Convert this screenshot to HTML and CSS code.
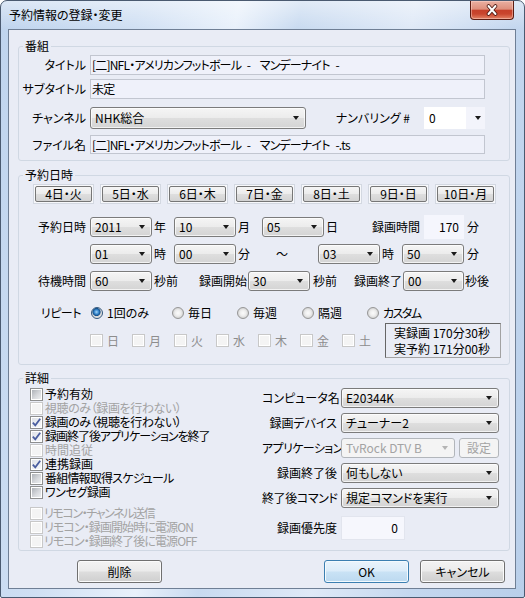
FILE: index.html
```html
<!DOCTYPE html>
<html lang="ja">
<head>
<meta charset="utf-8">
<title>予約情報の登録・変更</title>
<link rel="stylesheet" href="styles.css">
</head>
<body>
<div class="window">
  <div class="titlebar">
    <div class="title">予約情報の登録・変更</div>
    <div class="close">
      <svg width="14" height="12" viewBox="0 0 14 12"><path d="M3.5 2 L10.5 10 M10.5 2 L3.5 10" stroke="#4a1710" stroke-width="3.6" stroke-linecap="round"/><path d="M3.5 2 L10.5 10 M10.5 2 L3.5 10" stroke="#ffffff" stroke-width="2" stroke-linecap="round"/></svg>
    </div>
  </div>
  <div class="client">
    <fieldset class="group g1">
      <legend>番組</legend>
      <div class="row r1">
        <span class="lbl">タイトル</span>
        <span class="edit">[二]NFL・アメリカンフットボール&nbsp;&nbsp;&nbsp;-&nbsp;&nbsp;&nbsp;&nbsp;&nbsp;マンデーナイト&nbsp;&nbsp;&nbsp;-</span>
      </div>
      <div class="row r2">
        <span class="lbl">サブタイトル</span>
        <span class="edit">未定</span>
      </div>
      <div class="row r3">
        <span class="lbl">チャンネル</span>
        <span class="cmb w216 h22"><span class="v">NHK総合</span><i class="arr"></i></span>
        <span class="lbl2">ナンバリング #</span>
        <span class="ecmb"><span class="ev">0</span><i class="arr"></i></span>
      </div>
      <div class="row r4">
        <span class="lbl">ファイル名</span>
        <span class="edit">[二]NFL・アメリカンフットボール&nbsp;&nbsp;&nbsp;-&nbsp;&nbsp;&nbsp;&nbsp;&nbsp;マンデーナイト&nbsp;&nbsp;&nbsp;-.ts</span>
      </div>
    </fieldset>

    <fieldset class="group g2">
      <legend>予約日時</legend>
      <div class="row days">
        <span class="dbtn"><span>4日・火</span></span>
        <span class="dbtn"><span>5日・水</span></span>
        <span class="dbtn"><span>6日・木</span></span>
        <span class="dbtn"><span>7日・金</span></span>
        <span class="dbtn"><span>8日・土</span></span>
        <span class="dbtn"><span>9日・日</span></span>
        <span class="dbtn"><span>10日・月</span></span>
      </div>
      <div class="row srow s1">
        <span class="lbl">予約日時</span>
        <span class="cmb w62"><span class="v">2011</span><i class="arr"></i></span>
        <span class="unit u22">年</span>
        <span class="cmb w62"><span class="v">10</span><i class="arr"></i></span>
        <span class="unit u26">月</span>
        <span class="cmb w62"><span class="v">05</span><i class="arr"></i></span>
        <span class="unit u48">日</span>
        <span class="unit u52 nopad">録画時間</span>
        <span class="numbox">170</span>
        <span class="unit u3">分</span>
      </div>
      <div class="row srow">
        <span class="lbl"></span>
        <span class="cmb w62"><span class="v">01</span><i class="arr"></i></span>
        <span class="unit u22">時</span>
        <span class="cmb w62"><span class="v">00</span><i class="arr"></i></span>
        <span class="unit u26">分</span>
        <span class="unit tilde">～</span>
        <span class="cmb w62"><span class="v">03</span><i class="arr"></i></span>
        <span class="unit u22">時</span>
        <span class="cmb w62"><span class="v">50</span><i class="arr"></i></span>
        <span class="unit u3">分</span>
      </div>
      <div class="row srow">
        <span class="lbl">待機時間</span>
        <span class="cmb w62"><span class="v">60</span><i class="arr"></i></span>
        <span class="unit u47">秒前</span>
        <span class="unit u49 nopad">録画開始</span>
        <span class="cmb w62"><span class="v">30</span><i class="arr"></i></span>
        <span class="unit u44">秒前</span>
        <span class="unit u49 nopad">録画終了</span>
        <span class="cmb w61"><span class="v">00</span><i class="arr"></i></span>
        <span class="unit u1">秒後</span>
      </div>
      <div class="row rep">
        <span class="lbl rlbl">リピート</span>
        <span class="ri first"><span class="radio on"></span>1回のみ</span>
        <span class="ri"><span class="radio"></span>毎日</span>
        <span class="ri"><span class="radio"></span>毎週</span>
        <span class="ri"><span class="radio"></span>隔週</span>
        <span class="ri kana"><span class="radio"></span>カスタム</span>
      </div>
      <div class="row wk">
        <span class="lbl"></span>
        <span class="wi"><span class="cb dis"></span>日</span>
        <span class="wi"><span class="cb dis"></span>月</span>
        <span class="wi"><span class="cb dis"></span>火</span>
        <span class="wi"><span class="cb dis"></span>水</span>
        <span class="wi"><span class="cb dis"></span>木</span>
        <span class="wi"><span class="cb dis"></span>金</span>
        <span class="wi"><span class="cb dis"></span>土</span>
        <div class="info">実録画 170分30秒<br>実予約 171分00秒</div>
      </div>
    </fieldset>

    <fieldset class="group g3">
      <legend>詳細</legend>
      <div class="detail">
        <div class="checks">
          <div class="ck"><span class="cb"></span>予約有効</div>
          <div class="ck dis ls4"><span class="cb dis"></span>視聴のみ（録画を行わない）</div>
          <div class="ck ls4"><span class="cb chk"><svg width="11" height="11" viewBox="0 0 11 11"><path d="M1.8 5.6 L4.3 8.3 L9.2 1.8" stroke="#4a5ea0" stroke-width="1.8" fill="none"/></svg></span>録画のみ（視聴を行わない）</div>
          <div class="ck ls10"><span class="cb chk"><svg width="11" height="11" viewBox="0 0 11 11"><path d="M1.8 5.6 L4.3 8.3 L9.2 1.8" stroke="#4a5ea0" stroke-width="1.8" fill="none"/></svg></span>録画終了後アプリケーションを終了</div>
          <div class="ck dis"><span class="cb dis"></span>時間追従</div>
          <div class="ck"><span class="cb chk"><svg width="11" height="11" viewBox="0 0 11 11"><path d="M1.8 5.6 L4.3 8.3 L9.2 1.8" stroke="#4a5ea0" stroke-width="1.8" fill="none"/></svg></span>連携録画</div>
          <div class="ck ls8"><span class="cb"></span>番組情報取得スケジュール</div>
          <div class="ck ls4"><span class="cb"></span>ワンセグ録画</div>
          <div class="ck dis sep ls14 tight"><span class="cb dis"></span>リモコン・チャンネル送信</div>
          <div class="ck dis ls9 tight"><span class="cb dis"></span>リモコン・録画開始時に電源ON</div>
          <div class="ck dis ls9 tight"><span class="cb dis"></span>リモコン・録画終了後に電源OFF</div>
        </div>
        <div class="props">
          <div class="prow"><span class="plbl">コンピュータ名</span><span class="cmb w158"><span class="v">E20344K</span><i class="arr"></i></span></div>
          <div class="prow"><span class="plbl">録画デバイス</span><span class="cmb w158"><span class="v">チューナー2</span><i class="arr"></i></span></div>
          <div class="prow"><span class="plbl ls6">アプリケーション</span><span class="cmb w114 disabled"><span class="v">TvRock DTV B</span><i class="arr"></i></span><span class="setbtn">設定</span></div>
          <div class="prow"><span class="plbl">録画終了後</span><span class="cmb w158"><span class="v">何もしない</span><i class="arr"></i></span></div>
          <div class="prow"><span class="plbl ls4">終了後コマンド</span><span class="cmb w158"><span class="v">規定コマンドを実行</span><i class="arr"></i></span></div>
          <div class="prow prio"><span class="plbl">録画優先度</span><span class="priobox">0</span></div>
        </div>
      </div>
    </fieldset>

    <div class="btnrow">
      <span class="btn del">削除</span>
      <span class="btn ok">OK</span>
      <span class="btn cancel">キャンセル</span>
    </div>
  </div>
</div>
</body>
</html>
```

FILE: styles.css
```css
* { box-sizing: border-box; }
html, body { margin: 0; padding: 0; }
body {
  width: 525px;
  height: 598px;
  overflow: hidden;
  background: #ffffff;
  font-family: "Noto Sans CJK JP", "Noto Sans", sans-serif;
  font-size: 12px;
  line-height: 16px;
  color: #000;
  font-feature-settings: "palt" 1;
}

.window {
  width: 525px;
  height: 598px;
  display: flex;
  flex-direction: column;
  padding: 0 8px 8px 7px;
  border: 1px solid #4a5a70;
  border-radius: 7px 7px 2px 2px;
  background:
    linear-gradient(180deg, rgba(255,255,255,.45) 0, rgba(255,255,255,0) 28px),
    linear-gradient(100deg, #bfd4ee 0%, #cfdff3 22%, #e9f1fb 38%, #c8daf0 48%, #dfe9f7 66%, #c4d7ef 82%, #b9cfea 100%);
}

.titlebar {
  height: 28px;
  flex: none;
  display: flex;
  align-items: flex-start;
}
.title {
  margin-top: 6px;
  margin-left: 1px;
  line-height: 16px;
}
.close {
  margin-left: auto;
  margin-right: 2px;
  width: 44px;
  height: 19px;
  border: 1px solid #5b1c12;
  border-top: none;
  border-radius: 0 0 4px 4px;
  background: linear-gradient(#eab0a2 0%, #de8f7c 45%, #c6402a 52%, #c9462e 72%, #e38366 100%);
  box-shadow: inset 0 0 0 1px rgba(255,220,210,.45);
  display: flex;
  align-items: center;
  justify-content: center;
}

.client {
  flex: none;
  height: 560px;
  background: #e9ecf5;
  border: 1px solid #6f7f95;
}

.group {
  margin: 0 5px 0 9px;
  padding: 0;
  border: 1px solid #d0d8e3;
  border-radius: 3px;
  min-width: 0;
}
.group legend {
  margin-left: 4px;
  padding: 0 2px;
  line-height: 16px;
  height: 16px;
}

.row {
  display: flex;
  align-items: center;
}
.row > * { flex: none; }

.lbl {
  width: 71px;
  padding-right: 4px;
  text-align: right;
  white-space: nowrap;
}
.lbl2 {
  width: 118px;
  padding-right: 14px;
  text-align: right;
  white-space: nowrap;
}

/* group 1 */
.g1 { margin-top: 8px; padding-bottom: 6px; }
.g1 .r1 { margin-top: 1px; height: 20px; }
.g1 .r2 { margin-top: 4px; height: 20px; }
.g1 .r3 { margin-top: 8px; height: 22px; }
.g1 .r4 { margin-top: 6px; height: 19px; }

.edit {
  width: 395px;
  height: 100%;
  border: 1px solid #c2c6d0;
  background: #eff1fa;
  padding-left: 1px;
  display: flex;
  align-items: center;
  white-space: nowrap;
  overflow: hidden;
  letter-spacing: -0.8px;
}

.cmb {
  display: flex;
  align-items: center;
  height: 20px;
  border: 1px solid #7b7b7b;
  border-radius: 3px;
  background: linear-gradient(#f5f5f5 0%, #ececec 48%, #dedede 52%, #d4d4d4 100%);
  box-shadow: inset 0 0 0 1px rgba(255,255,255,.7);
  padding-left: 4px;
  white-space: nowrap;
}
.cmb.h22 { height: 22px; }
.cmb .v { flex: 1; }
.arr {
  display: block;
  width: 0;
  height: 0;
  border-left: 3.5px solid transparent;
  border-right: 3.5px solid transparent;
  border-top: 4px solid #1a1a1a;
  margin-right: 6px;
}
.w62 { width: 62px; }
.w61 { width: 61px; }
.w216 { width: 216px; }
.w158 { width: 158px; }
.w114 { width: 114px; }

.cmb.disabled {
  border-color: #b2b6bb;
  background: #f4f4f4;
  box-shadow: none;
  color: #a3a3a3;
}
.cmb.disabled .arr { border-top-color: #b4b4b4; }

.ecmb {
  width: 61px;
  height: 22px;
  display: flex;
  align-items: center;
  background: #f3f4fb;
}
.ecmb .ev {
  width: 42px;
  height: 100%;
  background: #ffffff;
  padding-left: 5px;
  display: flex;
  align-items: center;
}
.ecmb .arr { margin-left: auto; margin-right: 4px; }

/* group 2 */
.g2 { margin-top: 6px; padding-bottom: 6px; }
.days {
  margin-top: 1px;
  height: 20px;
  padding-left: 14px;
  gap: 6px;
}
.dbtn {
  width: 61px;
  height: 20px;
  border: 1px solid #d3d8e1;
  background: #f7f8fb;
  padding: 1px;
  display: flex;
}
.dbtn span {
  flex: 1;
  border: 1px solid #767676;
  border-radius: 2px;
  background: linear-gradient(#f5f5f5 0%, #ececec 48%, #dedede 52%, #d3d3d3 100%);
  display: flex;
  align-items: center;
  justify-content: center;
  line-height: 14px;
}

.srow { height: 20px; margin-top: 7px; }
.s1 { margin-top: 13px; }
.unit { padding-left: 2px; white-space: nowrap; }
.unit.nopad { padding-left: 0; }
.u22 { width: 22px; }
.u26 { width: 26px; }
.u48 { width: 48px; }
.u52 { width: 52px; }
.u47 { width: 47px; }
.u49 { width: 49px; }
.u44 { width: 44px; padding-left: 3px; }
.u3 { padding-left: 3px; }
.u1 { padding-left: 1px; }
.tilde { width: 56px; padding-left: 14px; }

.numbox {
  width: 40px;
  height: 24px;
  background: #f5f6fd;
  text-align: right;
  padding-right: 5px;
  line-height: 24px;
}

.rep { margin-top: 14px; height: 16px; }
.rlbl { padding-right: 9px; letter-spacing: -0.5px; }
.ri {
  display: flex;
  align-items: center;
  width: 65px;
  white-space: nowrap;
}
.ri.first { width: 81px; }
.ri.kana { letter-spacing: -1.5px; }
.radio {
  flex: none;
  width: 12px;
  height: 12px;
  border-radius: 50%;
  border: 1px solid #969696;
  background: radial-gradient(circle at 50% 50%, #fbfbfb 0, #eeeeee 40%, #d2d2d2 75%, #c4c4c4 100%);
  margin-left: 1px;
  margin-right: 4px;
}
.radio.on {
  border-color: #34597e;
  background: radial-gradient(circle at 45% 40%, #a7d6f5 0, #3f8ed2 25%, #13508c 45%, #d8d8d8 55%, #f4f4f4 100%);
}

.wk { margin-top: 2px; height: 35px; }
.wi {
  width: 42px;
  display: flex;
  align-items: center;
  color: #8d8d8d;
}
.wi .cb { margin-right: 4px; }
.info {
  margin-left: 1px;
  width: 116px;
  height: 35px;
  border: 1px solid;
  border-color: #666666 #a2a2a2 #a2a2a2 #666666;
  padding: 1px 0 0 8px;
  line-height: 16px;
  white-space: nowrap;
}

/* checkbox */
.cb {
  flex: none;
  position: relative;
  width: 13px;
  height: 13px;
  border: 1px solid #8e8f8f;
  background: #ffffff;
  display: inline-block;
  letter-spacing: 0;
}
.cb::before {
  content: "";
  position: absolute;
  left: 1px;
  top: 1px;
  right: 1px;
  bottom: 1px;
  background: linear-gradient(135deg, #aeb2b8 0%, #d6d8dc 55%, #eceef0 100%);
}
.cb.chk::before {
  background: linear-gradient(135deg, #dfe2e8 0%, #f7f8fa 100%);
}
.cb.dis { border-color: #c8c8c8; }
.cb.dis::before { background: #f4f4f4; }
.cb svg { position: absolute; left: 0; top: 0; }

/* group 3 */
.g3 { margin-top: 5px; padding-bottom: 2px; }
.detail { display: flex; }
.checks {
  flex: none;
  width: 243px;
  padding-left: 11px;
  padding-top: 1px;
}
.ck {
  height: 14px;
  display: flex;
  align-items: center;
  line-height: 14px;
  white-space: nowrap;
}
.ck .cb { margin-right: 2px; }
.ck.tight .cb { margin-right: 1px; }
.ck.dis { color: #a3a3a3; }
.ck.sep { margin-top: 7px; }
.ls4 { letter-spacing: -0.4px; }
.ls6 { letter-spacing: -0.6px; }
.ls8 { letter-spacing: -0.8px; }
.ls9 { letter-spacing: -0.9px; }
.ls10 { letter-spacing: -1px; }
.ls14 { letter-spacing: -1.4px; }

.props { padding-top: 2px; }
.prow {
  display: flex;
  align-items: center;
  height: 20px;
  margin-top: 5px;
}
.prow > * { flex: none; }
.prow:first-child { margin-top: 0; }
.plbl {
  width: 79px;
  padding-right: 4px;
  text-align: right;
  white-space: nowrap;
}
.setbtn {
  margin-left: 4px;
  width: 40px;
  height: 20px;
  border: 1px solid #b2b6bb;
  border-radius: 3px;
  background: #f4f4f4;
  color: #a3a3a3;
  display: flex;
  align-items: center;
  justify-content: center;
}
.prio { margin-top: 8px; height: 24px; }
.priobox {
  width: 64px;
  height: 24px;
  background: #f6f7fd;
  border: 1px solid #e2e5ee;
  text-align: right;
  padding-right: 6px;
  line-height: 22px;
}

/* buttons */
.btnrow {
  display: flex;
  margin-top: 9px;
  padding-left: 68px;
  height: 23px;
}
.btn {
  flex: none;
  width: 85px;
  height: 23px;
  border: 1px solid #707070;
  border-radius: 3px;
  background: linear-gradient(#f3f3f3 0%, #ebebeb 48%, #dddddd 52%, #cfcfcf 100%);
  box-shadow: inset 0 0 0 1px #fbfbfb;
  display: flex;
  align-items: center;
  justify-content: center;
}
.btn.ok {
  margin-left: 162px;
  border-color: #3c7fb1;
  background: linear-gradient(#eaf4fc 0%, #dcecf9 48%, #c9e2f5 52%, #bcd9f0 100%);
  box-shadow: inset 0 0 0 1px #f4fafe;
}
.btn.cancel { margin-left: 11px; }
```
